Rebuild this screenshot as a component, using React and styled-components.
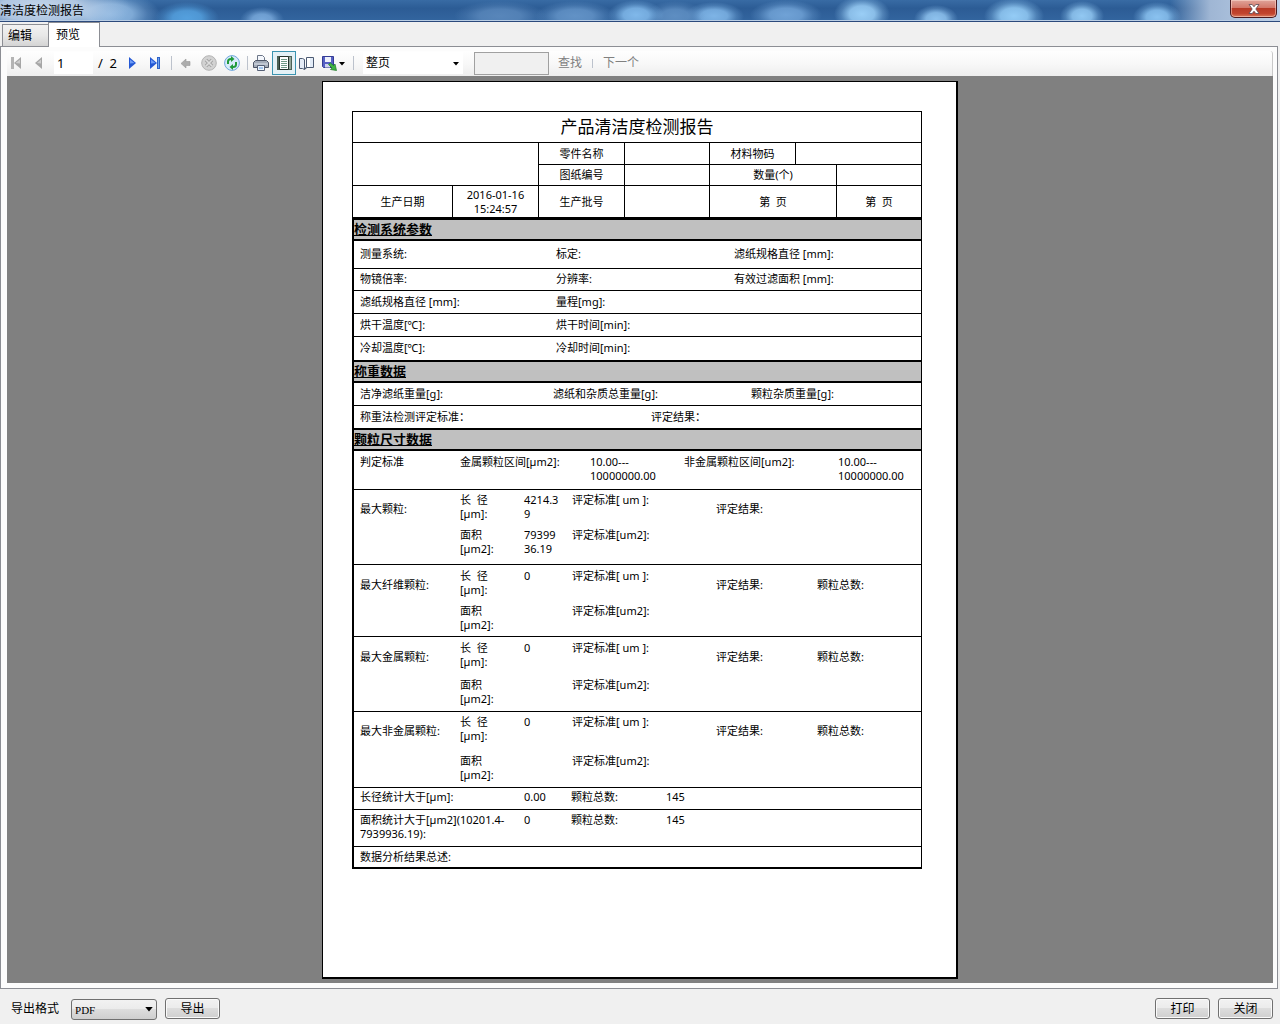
import React from "react";
import styled, { createGlobalStyle, css } from "styled-components";

const sans = `"Noto Sans", "Noto Sans CJK SC", sans-serif`;

const GlobalStyle = createGlobalStyle`
  *, *::before, *::after { box-sizing: border-box; }
  body {
    margin: 0;
    background: #f0f0f0;
    color: #000;
    font: 12px/16px ${sans};
  }
  button, input, select { font: inherit; color: inherit; margin: 0; }
`;

const Window = styled.div`
  display: flex;
  flex-direction: column;
  min-height: 100vh;
`;

/* ---------- title bar ---------- */

const glow = (x, y, rx, ry, color) =>
  `radial-gradient(ellipse ${rx}px ${ry}px at ${x}px ${y}px, rgba(${color}, 1), rgba(${color}, 0.85) 45%, rgba(${color}, 0.3) 75%, rgba(${color}, 0))`;

const glows = [
  glow(40, 8, 90, 30, "196, 214, 236"),
  glow(110, 14, 50, 22, "140, 182, 224"),
  glow(187, 18, 32, 16, "84, 160, 222"),
  glow(262, 20, 22, 13, "120, 168, 218"),
  glow(500, 16, 46, 15, "88, 134, 186"),
  glow(575, 16, 40, 15, "98, 146, 198"),
  glow(636, 15, 28, 15, "128, 184, 234"),
  glow(675, 16, 30, 15, "94, 142, 194"),
  glow(714, 16, 30, 14, "126, 180, 230"),
  glow(786, 15, 36, 15, "112, 162, 214"),
  glow(862, 14, 28, 18, "154, 206, 246"),
  glow(936, 19, 22, 14, "142, 194, 238"),
  glow(1014, 16, 30, 18, "148, 204, 246"),
  glow(1082, 16, 22, 15, "146, 200, 242"),
  glow(1157, 17, 24, 15, "138, 194, 240"),
].join(", ");

const TitleBar = styled.header`
  display: flex;
  justify-content: space-between;
  align-items: flex-start;
  height: 22px;
  border-bottom: 1px solid #2c4a7c;
  box-shadow: inset 0 -1px 0 #b9cde4;
  background:
    ${glows},
    linear-gradient(90deg, transparent calc(100% - 110px), #9fb6d4 calc(100% - 70px), #bcd0e8),
    linear-gradient(#386ba4, #2c5c95 40%, #33659f);
`;

const Title = styled.h1`
  margin: 0;
  padding-top: 3px;
  font-size: 12px;
  line-height: 16px;
  font-weight: 400;
`;

const CloseButton = styled.button`
  display: grid;
  place-items: center;
  width: 47px;
  height: 18px;
  margin-right: 3px;
  padding: 0;
  border: 1px solid #4a1a1e;
  border-top: 0;
  border-radius: 0 0 5px 5px;
  background: linear-gradient(#e0a49a, #d3786a 45%, #b83a26 50%, #c2452e 80%, #d97a5c);
  box-shadow: inset 0 0 0 1px rgba(255, 225, 215, 0.5);
`;

/* ---------- tabs ---------- */

const TabStrip = styled.div`
  display: flex;
  align-items: flex-end;
  height: 24px;
  padding-left: 2px;
`;

const Tab = styled.button`
  height: 22px;
  padding: 0 16px 0 5px;
  border: 1px solid #8c8e94;
  border-bottom: 0;
  border-right: 0;
  background: linear-gradient(#f2f2f2, #e8e8e8 50%, #d4d4d4);
  line-height: 16px;

  ${(p) =>
    p.$active &&
    css`
      position: relative;
      height: 25px;
      margin-bottom: -1px;
      padding: 0 19px 0 7px;
      border-right: 1px solid #8c8e94;
      background: #fff;
    `}
`;

const Panel = styled.main`
  flex: 1;
  display: flex;
  flex-direction: column;
  margin-right: 2px;
  padding: 4px 4px 5px 6px;
  border: 1px solid #8c8e94;
  background: #fcfcfc;
`;

/* ---------- viewer toolbar ---------- */

const Toolbar = styled.div`
  display: flex;
  align-items: center;
  height: 25px;
  padding-bottom: 1px;
  border-radius: 0 3px 0 0;
  border-right: 1px solid #c8c8c8;
  background: linear-gradient(#fefefe, #f8f8f8 50%, #eeeeee);
`;

const IconButton = styled.button`
  display: flex;
  align-items: center;
  width: ${(p) => (p.$wide ? 31 : 22)}px;
  height: 22px;
  padding: 0;
  border: 0;
  background: ${(p) => (p.$pressed ? "#e4f1f6" : "transparent")};
  box-shadow: ${(p) => (p.$pressed ? "0 0 0 1px #3c94b0" : "none")};

  svg { display: block; }
`;

const PageInput = styled.input`
  width: 39px;
  height: 22px;
  margin-left: 3px;
  padding: 0 0 0 3px;
  border: 0;
  background: #fff;
  font-size: 13px;
`;

const PageTotal = styled.span`
  width: 28px;
  padding-left: 5px;
  font-size: 13px;
  white-space: pre;
`;

const Separator = styled.span`
  display: flex;
  justify-content: center;
  width: ${(p) => p.$width}px;

  &::before {
    content: "";
    width: 1px;
    height: ${(p) => (p.$short ? 9 : 14)}px;
    background: #bcc2cc;
  }
`;

const SelectBox = styled.span`
  position: relative;
  display: inline-flex;

  svg {
    position: absolute;
    right: 4px;
    top: ${(p) => (p.$boxed ? 9 : 10)}px;
    pointer-events: none;
  }
`;

const ZoomSelect = styled.select`
  appearance: none;
  width: 100px;
  height: 22px;
  margin-left: 5px;
  padding: 0 0 0 3px;
  border: 0;
  border-radius: 0;
  background: #fff;
`;

const FindInput = styled.input`
  width: 75px;
  height: 23px;
  margin-left: 11px;
  border: 1px solid #a0a0a0;
  background: #f0f0f0;
`;

const TextButton = styled.button`
  padding: 0 8px 0 9px;
  border: 0;
  background: transparent;
  color: #808080;
`;

/* ---------- report page ---------- */

const Viewer = styled.div`
  flex: 1;
  padding: 5px 0 4px;
  background: #808080;
`;

const Paper = styled.article`
  width: 636px;
  min-height: 898px;
  margin: 0 auto;
  padding: 29px 34px 29px 29px;
  border: 1px solid #000;
  border-width: 1px 2px 2px 1px;
  background: #fff;
  font-size: 11px;
  line-height: 14px;
`;

const HeadTable = styled.table`
  width: 100%;
  table-layout: fixed;
  border-spacing: 0;
  border-left: 1px solid #000;
  border-top: 1px solid #000;
  text-align: center;

  td, th {
    padding: 0;
    border-right: 1px solid #000;
    border-bottom: 1px solid #000;
    font-weight: 400;
  }
  tr:last-child td { border-bottom: 0; }
`;

const HeadRow = styled.tr`
  height: ${(p) => p.$height}px;
`;

const ReportTitle = styled.th`
  font-size: 17px;
  line-height: 24px;
`;

const Body = styled.section`
  border-left: 2px solid #000;
  border-right: 1px solid #000;
  border-bottom: ${(p) => (p.$last ? "2px solid #000" : "0")};
`;

const SectionTitle = styled.h2`
  margin: 0;
  border-top: ${(p) => (p.$heavy ? 3 : 2)}px solid #000;
  border-bottom: 2px solid #000;
  background: #c0c0c0;
  font-size: 13px;
  line-height: 19px;
  font-weight: 700;
  text-decoration: underline;
`;

const DataTable = styled.table`
  display: block;
  border-spacing: 0;

  tbody { display: block; }
  tr:last-child { border-bottom: 0; }
`;

const Row = styled.tr`
  display: grid;
  grid-template-columns: ${(p) => p.$cols};
  align-items: ${(p) => (p.$top ? "start" : "center")};
  min-height: ${(p) => p.$height}px;
  padding-top: ${(p) => p.$top || 0}px;
  padding-bottom: ${(p) => (p.$top ? 0 : 1)}px;
  border-bottom: 1px solid #000;
`;

const Cell = styled.td`
  padding: ${(p) => (p.$lowered ? 9 : 0)}px 0 0 6px;
  white-space: nowrap;
`;

const Pair = styled.td`
  display: grid;
  grid-auto-rows: 28px;
  row-gap: ${(p) => p.$gap}px;
  padding: 0 0 0 6px;
  white-space: nowrap;
`;

/* ---------- bottom bar ---------- */

const Footer = styled.footer`
  display: flex;
  align-items: flex-start;
  gap: 8px;
  height: 35px;
  padding: 9px 7px 0 11px;
`;

const FormatLabel = styled.label`
  padding: 3px 4px 0 0;
`;

const FormatSelect = styled.select`
  appearance: none;
  width: 86px;
  height: 21px;
  margin-top: 1px;
  padding: 0 0 0 3px;
  border: 1px solid #707070;
  border-radius: 3px;
  background: linear-gradient(#f2f2f2, #ebebeb 50%, #dddddd 50%, #cfcfcf);
  font: 11px/14px "Liberation Serif", serif;
`;

const PushButton = styled.button`
  width: 55px;
  height: 21px;
  padding: 0;
  border: 1px solid #707070;
  border-radius: 3px;
  background: linear-gradient(#f2f2f2, #ebebeb 50%, #dddddd 50%, #cfcfcf);
  box-shadow: inset 0 0 0 1px #fafafa;
`;

const Spacer = styled.span`
  flex: 1;
`;

/* ---------- icons ---------- */

const Icon = ({ width = 22, children }) => (
  <svg width={width} height="22" viewBox={`0 0 ${width} 22`} aria-hidden="true">
    {children}
  </svg>
);

const Caret = ({ size = 6 }) => (
  <svg width={size} height={size / 2 + 1} viewBox="0 0 6 4" aria-hidden="true">
    <path d="M0 0h6L3 3.5z" fill="#000" />
  </svg>
);

const FirstIcon = () => (
  <Icon>
    <path d="M4 5h3v12H4z" fill="#b4b4b4" />
    <path d="M14 5v12L7 11z" fill="#a6a6a6" />
    <path d="M13 7.500v4L8.500 11z" fill="#cdcdcd" />
  </Icon>
);
const PrevIcon = () => (
  <Icon>
    <path d="M13 5v12L6 11z" fill="#a6a6a6" />
    <path d="M12 7.500v4L8 11z" fill="#cdcdcd" />
  </Icon>
);
const NextIcon = () => (
  <Icon>
    <path d="M8 5v12l7-6z" fill="#2458d4" />
    <path d="M9 7.500v4l4.500-.5z" fill="#6f9cf5" />
  </Icon>
);
const LastIcon = () => (
  <Icon>
    <path d="M7 5v12l7-6z" fill="#2458d4" />
    <path d="M8 7.500v4l4.500-.5z" fill="#6f9cf5" />
    <path d="M14 5h3v12h-3z" fill="#2f62c8" />
    <path d="M15 6h1v10h-1z" fill="#6fa4ee" />
  </Icon>
);
const BackIcon = () => (
  <Icon>
    <path d="M4 11.500l5-4.500v2.500h4v4H9v2.500z" fill="#adadad" stroke="#999" strokeWidth=".6" />
  </Icon>
);
const StopIcon = () => (
  <Icon>
    <circle cx="10" cy="11" r="7.300" fill="#d2d2d2" stroke="#b4b4b4" />
    <path d="M7 8l6 6M13 8l-6 6" stroke="#a4a4a4" strokeWidth="3.400" />
    <path d="M7 8l6 6M13 8l-6 6" stroke="#dedede" strokeWidth="1.600" />
  </Icon>
);
const RefreshIcon = () => (
  <Icon>
    <circle cx="11" cy="11" r="7.400" fill="#d8ebfb" stroke="#6fa6dc" />
    <path d="M7 12V9.500c0-1.500 1-2.500 3-2.500" fill="none" stroke="#1f9a3a" strokeWidth="2" />
    <path d="M10 4l3.500 3-3.500 3z" fill="#1f9a3a" />
    <path d="M15 10v2.500c0 1.500-1 2.500-3 2.500" fill="none" stroke="#1f9a3a" strokeWidth="2" />
    <path d="M12 12l-3.500 3 3.500 3z" fill="#1f9a3a" />
  </Icon>
);
const PrintIcon = () => (
  <Icon>
    <path d="M6.500 3.500h5l2 2V10h-7z" fill="#f4f7fc" stroke="#6c7688" />
    <path d="M2.500 10.500l2-2h11l2 2v5h-15z" fill="#a4acb9" stroke="#4d5566" />
    <path d="M3 12h14" stroke="#dde3ec" />
    <path d="M6.500 13.500h7v5h-7z" fill="#e9f2fc" stroke="#566076" />
    <path d="M8 16h4" stroke="#5f9ae0" />
  </Icon>
);
const LayoutIcon = () => (
  <Icon>
    <path d="M4 4h15v14H4z" fill="#4b6155" />
    <path d="M16 5h2v12h-2z" fill="#93a59a" />
    <path d="M6.500 4.500h9v13h-9z" fill="#fff" stroke="#26342c" />
    <path d="M8 7.500h6M8 9.500h6M8 11.500h6M8 13.500h6M8 15.500h6" stroke="#6f9a86" />
  </Icon>
);
const SetupIcon = () => (
  <Icon>
    <path d="M4.500 6.500h3l2 1v10l-2-1h-3z" fill="#e6edf7" stroke="#4c5a72" />
    <path d="M11.500 5.500h7v10h-7z" fill="#e3ecf7" stroke="#4c5a72" />
    <path d="M9.500 15.500h3l-3 2.500z" fill="#4c5a72" />
    <path d="M12 6h3v9h-3z" fill="#fff" />
  </Icon>
);
const SaveIcon = () => (
  <Icon width={31}>
    <path d="M5.500 4.500h11v11h-10l-1-1z" fill="#5660c4" stroke="#343c94" />
    <path d="M8 5h6v5H8z" fill="#eef1fb" />
    <path d="M8 12h5v3.500H8z" fill="#cfd4ee" />
    <path d="M11.500 12.500l2-1.500 3 2.500 1.500-1.500 1.500 6.500-6-1 1.500-1.500z" fill="#3fb344" stroke="#1b7624" strokeWidth=".7" />
    <path d="M22 10h6l-3 3.500z" fill="#000" />
  </Icon>
);

/* ---------- data ---------- */

const systemRows = [
  { height: 28, cols: "196px 178px 1fr", cells: ["测量系统:", "标定:", "滤纸规格直径 [mm]:"] },
  { height: 22, cols: "196px 178px 1fr", cells: ["物镜倍率:", "分辨率:", "有效过滤面积 [mm]:"] },
  { height: 23, cols: "196px 1fr", cells: ["滤纸规格直径 [mm]:", "量程[mg]:"] },
  { height: 23, cols: "196px 1fr", cells: ["烘干温度[℃]:", "烘干时间[min]:"] },
  { height: 23, cols: "196px 1fr", cells: ["冷却温度[℃]:", "冷却时间[min]:"] },
];

const weightRows = [
  { height: 23, cols: "193px 198px 1fr", cells: ["洁净滤纸重量[g]:", "滤纸和杂质总重量[g]:", "颗粒杂质重量[g]:"] },
  { height: 22, cols: "291px 1fr", cells: ["称重法检测评定标准：", "评定结果："] },
];

const particles = [
  { name: "最大颗粒:", height: 75, top: 3, gap: 7, length: ["4214.3", "9"], area: ["79399", "36.19"] },
  { name: "最大纤维颗粒:", height: 72, top: 4, gap: 7, length: ["0"], area: [], total: true },
  { name: "最大金属颗粒:", height: 75, top: 4, gap: 9, length: ["0"], area: [], total: true },
  { name: "最大非金属颗粒:", height: 76, top: 3, gap: 11, length: ["0"], area: [], total: true },
];

const Lines = ({ of }) => (
  <div>
    {of.map((line) => (
      <div key={line}>{line}</div>
    ))}
  </div>
);

const Rows = ({ rows }) => (
  <DataTable>
    <tbody>
      {rows.map((row) => (
        <Row key={row.cells[0]} $height={row.height} $cols={row.cols}>
          {row.cells.map((text) => (
            <Cell key={text}>{text}</Cell>
          ))}
        </Row>
      ))}
    </tbody>
  </DataTable>
);

const ReportHead = () => (
  <HeadTable>
    <colgroup>
      {[100, 86, 86, 85, 86, 41, 85].map((width, i) => (
        <col key={i} width={width} />
      ))}
    </colgroup>
    <tbody>
      <HeadRow $height={31}>
        <ReportTitle colSpan={7}>产品清洁度检测报告</ReportTitle>
      </HeadRow>
      <HeadRow $height={22}>
        <td colSpan={2} rowSpan={2} />
        <td>零件名称</td>
        <td />
        <td>材料物码</td>
        <td colSpan={2} />
      </HeadRow>
      <HeadRow $height={21}>
        <td>图纸编号</td>
        <td />
        <td colSpan={2}>数量(个)</td>
        <td />
      </HeadRow>
      <HeadRow $height={31}>
        <td>生产日期</td>
        <td>
          2016-01-16
          <br />
          15:24:57
        </td>
        <td>生产批号</td>
        <td />
        <td colSpan={2}>第&nbsp;&nbsp;页</td>
        <td>第&nbsp;&nbsp;页</td>
      </HeadRow>
    </tbody>
  </HeadTable>
);

const ParticleTable = () => (
  <DataTable>
    <tbody>
      <Row $height={39} $top={4} $cols="100px 130px 94px 154px 1fr">
        <Cell>判定标准</Cell>
        <Cell>金属颗粒区间[µm2]:</Cell>
        <Cell><Lines of={["10.00---", "10000000.00"]} /></Cell>
        <Cell>非金属颗粒区间[um2]:</Cell>
        <Cell><Lines of={["10.00---", "10000000.00"]} /></Cell>
      </Row>
      {particles.map((p) => (
        <Row key={p.name} $height={p.height} $top={p.top} $cols="100px 64px 48px 144px 101px 1fr">
          <Cell $lowered>{p.name}</Cell>
          <Pair $gap={p.gap}>
            <Lines of={["长\u00a0\u00a0径", "[µm]:"]} />
            <Lines of={["面积", "[µm2]:"]} />
          </Pair>
          <Pair $gap={p.gap}>
            <Lines of={p.length} />
            <Lines of={p.area} />
          </Pair>
          <Pair $gap={p.gap}>
            <Lines of={["评定标准[ um ]:"]} />
            <Lines of={["评定标准[um2]:"]} />
          </Pair>
          <Cell $lowered>评定结果:</Cell>
          <Cell $lowered>{p.total ? "颗粒总数:" : null}</Cell>
        </Row>
      ))}
      <Row $height={22} $top={2} $cols="164px 47px 95px 1fr">
        <Cell>长径统计大于[µm]:</Cell>
        <Cell>0.00</Cell>
        <Cell>颗粒总数:</Cell>
        <Cell>145</Cell>
      </Row>
      <Row $height={37} $top={3} $cols="164px 47px 95px 1fr">
        <Cell><Lines of={["面积统计大于[µm2](10201.4-", "7939936.19):"]} /></Cell>
        <Cell>0</Cell>
        <Cell>颗粒总数:</Cell>
        <Cell>145</Cell>
      </Row>
      <Row $height={20} $cols="1fr">
        <Cell>数据分析结果总述:</Cell>
      </Row>
    </tbody>
  </DataTable>
);

const ViewerToolbar = () => (
  <Toolbar role="toolbar" aria-label="预览">
    <IconButton aria-label="首页" disabled><FirstIcon /></IconButton>
    <IconButton aria-label="上一页" disabled><PrevIcon /></IconButton>
    <PageInput aria-label="页码" defaultValue="1" />
    <PageTotal>/  2</PageTotal>
    <IconButton aria-label="下一页"><NextIcon /></IconButton>
    <IconButton aria-label="末页"><LastIcon /></IconButton>
    <Separator $width={12} />
    <IconButton aria-label="返回" disabled><BackIcon /></IconButton>
    <IconButton aria-label="停止" disabled><StopIcon /></IconButton>
    <IconButton aria-label="刷新"><RefreshIcon /></IconButton>
    <Separator $width={8} />
    <IconButton aria-label="打印"><PrintIcon /></IconButton>
    <IconButton aria-label="打印布局" aria-pressed="true" $pressed><LayoutIcon /></IconButton>
    <IconButton aria-label="页面设置"><SetupIcon /></IconButton>
    <IconButton aria-label="导出" $wide><SaveIcon /></IconButton>
    <Separator $width={10} />
    <SelectBox>
      <ZoomSelect aria-label="缩放" defaultValue="整页">
        <option>整页</option>
      </ZoomSelect>
      <Caret />
    </SelectBox>
    <FindInput aria-label="查找内容" />
    <TextButton>查找</TextButton>
    <Separator $width={4} $short />
    <TextButton>下一个</TextButton>
  </Toolbar>
);

export default function App() {
  return (
    <>
      <GlobalStyle />
      <Window>
        <TitleBar>
          <Title>清洁度检测报告</Title>
          <CloseButton aria-label="关闭窗口">
            <svg width="12" height="10" viewBox="0 0 12 10" aria-hidden="true">
              <path
                d="M1 .5h3.200L6 2.800 7.800.5H11L7.800 5 11 9.500H7.800L6 7.200 4.200 9.500H1L4.200 5z"
                fill="#fff"
                stroke="#5b4a55"
                strokeWidth=".8"
              />
            </svg>
          </CloseButton>
        </TitleBar>
        <TabStrip role="tablist">
          <Tab role="tab" aria-selected="false">编辑</Tab>
          <Tab role="tab" aria-selected="true" $active>预览</Tab>
        </TabStrip>
        <Panel>
          <ViewerToolbar />
          <Viewer>
            <Paper>
              <ReportHead />
              <Body>
                <SectionTitle $heavy>检测系统参数</SectionTitle>
                <Rows rows={systemRows} />
              </Body>
              <Body>
                <SectionTitle>称重数据</SectionTitle>
                <Rows rows={weightRows} />
              </Body>
              <Body $last>
                <SectionTitle>颗粒尺寸数据</SectionTitle>
                <ParticleTable />
              </Body>
            </Paper>
          </Viewer>
        </Panel>
        <Footer>
          <FormatLabel htmlFor="format">导出格式</FormatLabel>
          <SelectBox $boxed>
            <FormatSelect id="format" defaultValue="PDF">
              <option>PDF</option>
            </FormatSelect>
            <Caret size={8} />
          </SelectBox>
          <PushButton>导出</PushButton>
          <Spacer />
          <PushButton>打印</PushButton>
          <PushButton>关闭</PushButton>
        </Footer>
      </Window>
    </>
  );
}
